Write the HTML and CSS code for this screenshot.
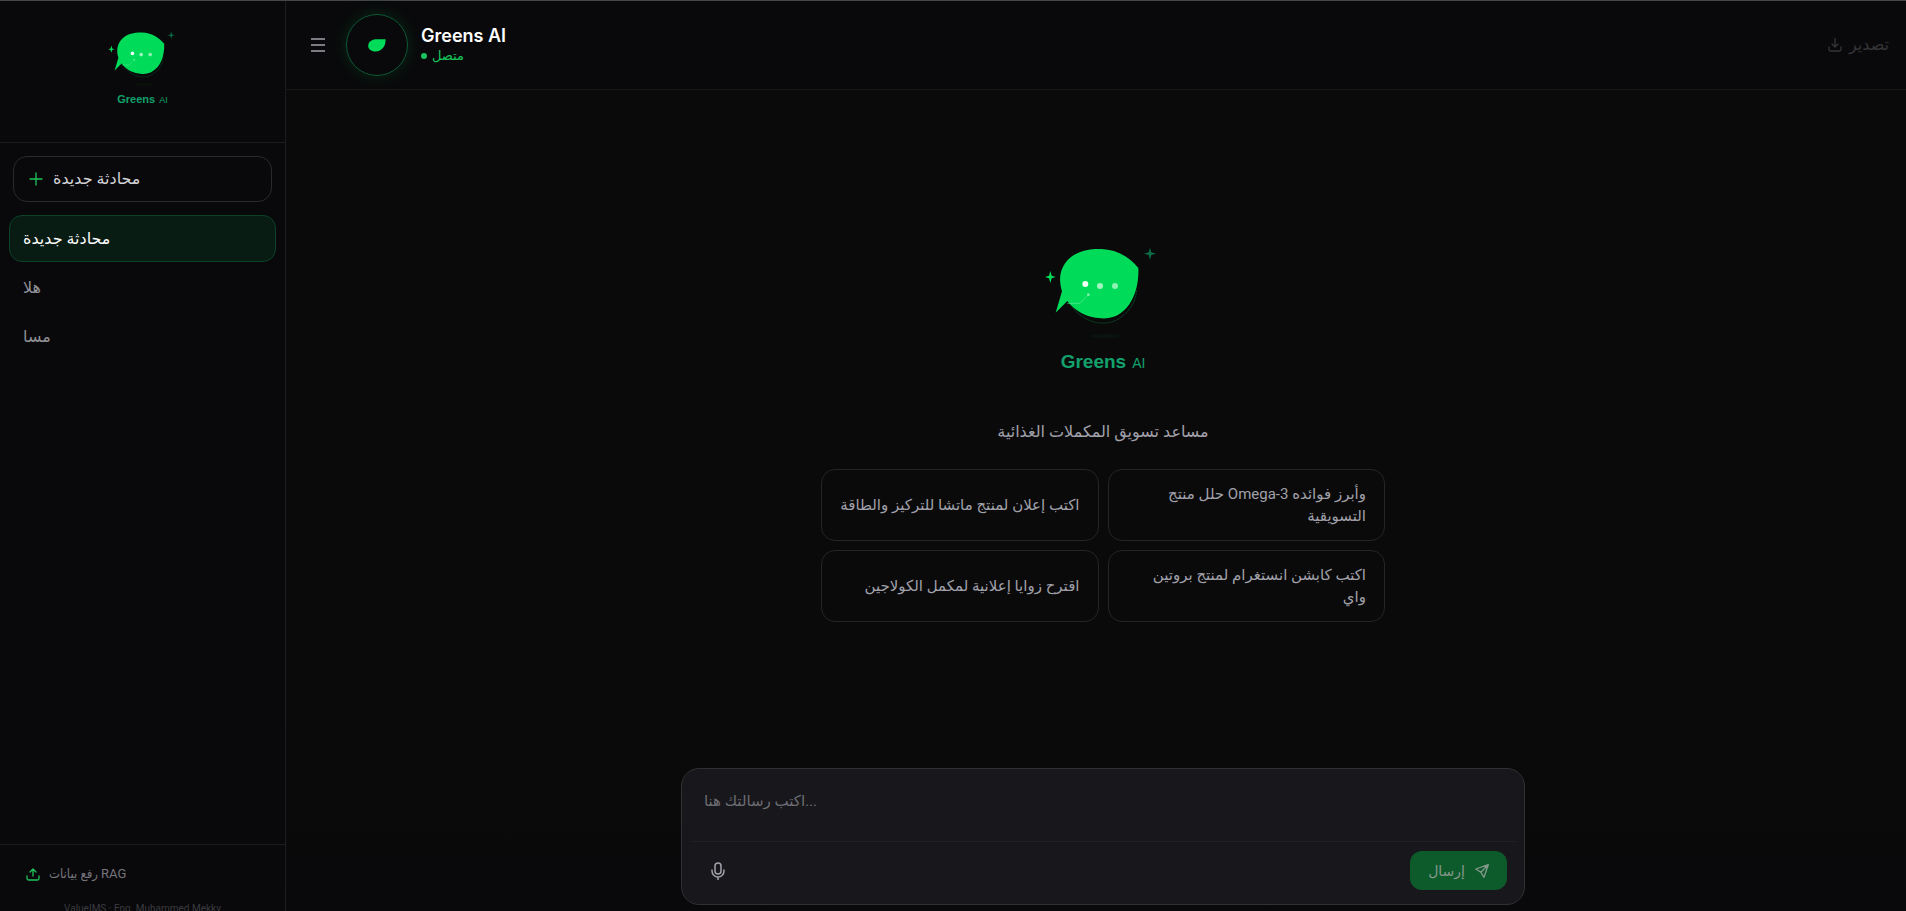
FILE: index.html
```html
<!DOCTYPE html>
<html lang="ar" dir="ltr">
<head>
<meta charset="utf-8">
<meta name="viewport" content="width=device-width, initial-scale=1">
<title>Greens AI</title>
<link rel="stylesheet" href="styles.css">
</head>
<body>
<svg class="sprite" aria-hidden="true">
  <symbol id="logo" viewBox="9 0 480 330">
    <path d="M150 222 C190 280 250 290 290 270 C325 250 346 222 350 180" fill="none" stroke="#0c3a20" stroke-width="3"/>
    <ellipse cx="255" cy="318" rx="46" ry="7" fill="#0a120d"/>
    <path d="M126 184 C114 145 121 112 146 87 C172 62 210 56 245 57 C290 59 328 80 355 114 C357 160 345 205 320 233 C298 257 272 267 243 265 C200 263 166 244 142 213 L107 248 Z" fill="#00dc5a"/>
    <path d="M142 220 H180 L205 194" fill="none" stroke="#5deb92" stroke-width="2"/>
    <circle cx="205" cy="194" r="4" fill="#80f0aa"/>
    <circle cx="196" cy="162" r="9" fill="#f2fff6"/>
    <circle cx="240" cy="168" r="9" fill="#a0f5c0"/>
    <circle cx="285" cy="168" r="9" fill="#8df2b3"/>
    <path d="M91 123 L95 137 L107 141 L95 145 L91 159 L87 145 L75 141 L87 137 Z" fill="#00dc5a"/>
    <path d="M390 53 L394 67 L408 71 L394 75 L390 89 L386 75 L372 71 L386 67 Z" fill="#0c6a45"/>
  </symbol>
</svg>
<div class="app">
  <aside class="sidebar">
    <div class="brand">
      <svg class="brand-logo" aria-hidden="true"><use href="#logo"/></svg>
      <div class="wordmark wordmark-small"><strong>Greens</strong><span>AI</span></div>
    </div>
    <button class="new-chat" type="button">
      <svg class="icon green" viewBox="0 0 14 14"><path d="M7 1v12M1 7h12"/></svg>
      <span>محادثة جديدة</span>
    </button>
    <nav class="chats">
      <a class="chat active" href="#">محادثة جديدة</a>
      <a class="chat" href="#">هلا</a>
      <a class="chat" href="#">مسا</a>
    </nav>
    <footer class="side-footer">
      <button class="upload" type="button">
        <svg class="icon green" viewBox="0 0 14 14"><path d="M7 9V2M4 5l3-3 3 3M1 9v2.500q0 1.500 1.500 1.500h9q1.500 0 1.500-1.500V9"/></svg>
        <span>رفع بيانات RAG</span>
      </button>
      <p class="credit">ValueIMS · Eng. Muhammed Mekky</p>
    </footer>
  </aside>
  <main class="main">
    <header class="topbar">
      <button class="menu" type="button" aria-label="القائمة">
        <svg class="icon" viewBox="0 0 14 14"><path d="M0 1h14M0 7h14M0 13h14"/></svg>
      </button>
      <span class="avatar">
        <svg class="leaf" viewBox="0 0 18 13"><path d="M17.500 .3C18 7 14 12.500 7.500 12.500 3 12.500 0 10 .2 6.500 .5 2 5 .3 9 .3Z"/></svg>
      </span>
      <div class="identity">
        <h1 class="title">Greens AI</h1>
        <p class="status"><span class="dot"></span>متصل</p>
      </div>
      <button class="export" type="button" disabled>
        <svg class="icon" viewBox="0 0 14 14"><path d="M7 0v9M4 6l3 3 3-3M1 9v2.500q0 1.500 1.500 1.500h9q1.500 0 1.500-1.500V9"/></svg>
        <span>تصدير</span>
      </button>
    </header>
    <section class="hero">
      <svg class="hero-logo" aria-hidden="true"><use href="#logo"/></svg>
      <div class="wordmark"><strong>Greens</strong><span>AI</span></div>
      <p class="tagline">مساعد تسويق المكملات الغذائية</p>
      <div class="cards">
        <button class="card" type="button">اكتب إعلان لمنتج ماتشا للتركيز والطاقة</button>
        <button class="card" type="button">حلل منتج Omega-3 وأبرز فوائده التسويقية</button>
        <button class="card" type="button">اقترح زوايا إعلانية لمكمل الكولاجين</button>
        <button class="card" type="button">اكتب كابشن انستغرام لمنتج بروتين واي</button>
      </div>
    </section>
    <div class="dock">
      <form class="composer">
        <textarea class="message" rows="1" placeholder="اكتب رسالتك هنا..." aria-label="اكتب رسالتك هنا"></textarea>
        <div class="tools">
          <button class="mic" type="button" aria-label="تسجيل صوتي">
            <svg class="mic-icon" viewBox="0 0 14 18"><rect x="4" y="1" width="6" height="11" rx="3"/><path d="M1 8v1a6 6 0 0 0 12 0V8M7 15v3"/></svg>
          </button>
          <button class="send" type="submit" disabled>
            <span>إرسال</span>
            <svg class="icon" viewBox="0 0 14 14"><path d="M13.300 .7 .8 5l5 3.200L9 13.300ZM13.300 .7 5.800 8.200"/></svg>
          </button>
        </div>
      </form>
    </div>
  </main>
</div>
</body>
</html>
```
FILE: styles.css
```css
* { box-sizing: border-box; }
body {
  margin: 0;
  background: #0a0a0a;
  color: #a1a1aa;
  font: 15px/22px Roboto, "DejaVu Sans", sans-serif;
}
h1, p { margin: 0; }
button { font: inherit; color: inherit; background: none; border: 0; padding: 0; }
.sprite { position: absolute; width: 0; height: 0; }
.icon {
  flex: none;
  width: 14px;
  height: 14px;
  fill: none;
  stroke: currentColor;
  stroke-width: 1.3;
  stroke-linecap: round;
  stroke-linejoin: round;
}
.green { color: #1fc45c; }
.wordmark {
  display: flex;
  align-items: baseline;
  gap: 6px;
  margin-top: 10px;
  color: #12a16c;
  font: 14px/24px "Liberation Sans", Arial, sans-serif;
}
.wordmark strong { font-size: 19px; }
.wordmark-small { gap: 4px; margin-top: 5px; font-size: 9px; line-height: 14px; }
.wordmark-small strong { font-size: 11px; }

.app {
  display: grid;
  grid-template-columns: 286px 1fr;
  height: 100vh;
  border-top: 1px solid #444547;
}

.sidebar {
  display: flex;
  flex-direction: column;
  min-height: 0;
  background: #09090b;
  border-right: 1px solid #1c1c1f;
}
.brand {
  display: flex;
  flex-direction: column;
  align-items: center;
  padding: 20px 0 35px;
  border-bottom: 1px solid #1c1c1f;
}
.brand-logo { width: 96px; height: 66px; }
.new-chat {
  display: flex;
  align-items: center;
  gap: 10px;
  height: 46px;
  margin: 13px;
  padding: 0 15px;
  border: 1px solid #2a2a2d;
  border-radius: 14px;
  color: #d4d4d8;
  font-size: 16px;
}
.chats {
  display: flex;
  flex: 1;
  flex-direction: column;
  gap: 2px;
  padding: 0 9px;
  font-size: 16px;
}
.chat {
  display: flex;
  align-items: center;
  height: 47px;
  padding: 0 13px;
  border: 1px solid transparent;
  border-radius: 13px;
  color: #909096;
  text-decoration: none;
}
.active { background: #081c14; border-color: #0c4228; color: #fafafa; }
.side-footer {
  flex: 0 0 67px;
  overflow: hidden;
  padding: 18px 26px 0;
  border-top: 1px solid #1c1c1f;
}
.upload {
  display: flex;
  align-items: center;
  gap: 9px;
  color: #75757b;
  font: 13px/22px Roboto, "DejaVu Sans Condensed", "DejaVu Sans", sans-serif;
}
.credit { padding: 13px 0; color: #3b3b40; font-size: 10px; text-align: center; }

.main {
  display: flex;
  flex-direction: column;
  min-width: 0;
  min-height: 0;
  background: linear-gradient(#0a0a0a 80%, #09090b);
}
.topbar {
  display: flex;
  align-items: center;
  height: 89px;
  padding: 0 17px 0 25px;
  background: #09090b;
  border-bottom: 1px solid #18181a;
}
.menu { display: flex; color: #a1a1aa; }
.menu .icon { stroke-linecap: butt; }
.avatar {
  display: grid;
  place-items: center;
  width: 62px;
  height: 62px;
  margin: 0 13px 0 21px;
  border: 1px solid #0c5a37;
  border-radius: 50%;
  box-shadow: 0 0 16px #00dc5a26;
}
.leaf { width: 18px; height: 13px; fill: #00dc5a; }
.title { color: #fff; font: 600 18px/22px Inter, sans-serif; }
.status { display: flex; align-items: center; gap: 5px; color: #16c65b; font-size: 13px; line-height: 18px; }
.dot { width: 6px; height: 6px; border-radius: 50%; background: currentColor; }
.export { display: flex; align-items: center; gap: 7px; margin-left: auto; color: #353538; font-size: 16px; }

.hero {
  display: flex;
  flex: 1;
  flex-direction: column;
  align-items: center;
  justify-content: center;
  padding: 0 0 7px 14px;
}
.hero-logo { width: 160px; height: 110px; }
.tagline { margin: 46px 0 26px; font-size: 16px; }
.cards {
  display: grid;
  grid-template-columns: 1fr 1fr;
  gap: 9px;
  width: 564px;
}
.card {
  min-height: 72px;
  padding: 12px 18px;
  border: 1px solid #252527;
  border-radius: 14px;
  text-align: right;
}

.dock { padding: 0 20px 6px 34px; }
.composer {
  max-width: 844px;
  margin: 0 auto;
  padding: 15px 8px 7px;
  background: #18181c;
  border: 1px solid #303032;
  border-radius: 18px;
}
.message {
  display: block;
  width: 100%;
  height: 57px;
  padding: 6px 14px;
  border: 0;
  background: none;
  color: #fafafa;
  font: inherit;
  resize: none;
}
.message::placeholder { color: #6d6d73; }
.tools {
  display: flex;
  align-items: center;
  justify-content: space-between;
  padding: 9px 9px 7px 21px;
  border-top: 1px solid #202023;
}
.mic { display: flex; }
.mic-icon { width: 14px; height: 18px; fill: none; stroke: #a1a1aa; stroke-width: 1.5; stroke-linecap: round; }
.send {
  display: flex;
  align-items: center;
  gap: 10px;
  height: 39px;
  padding: 0 18px;
  border-radius: 12px;
  background: #0d5a2b;
  color: #84998a;
  font-size: 14px;
}
```
